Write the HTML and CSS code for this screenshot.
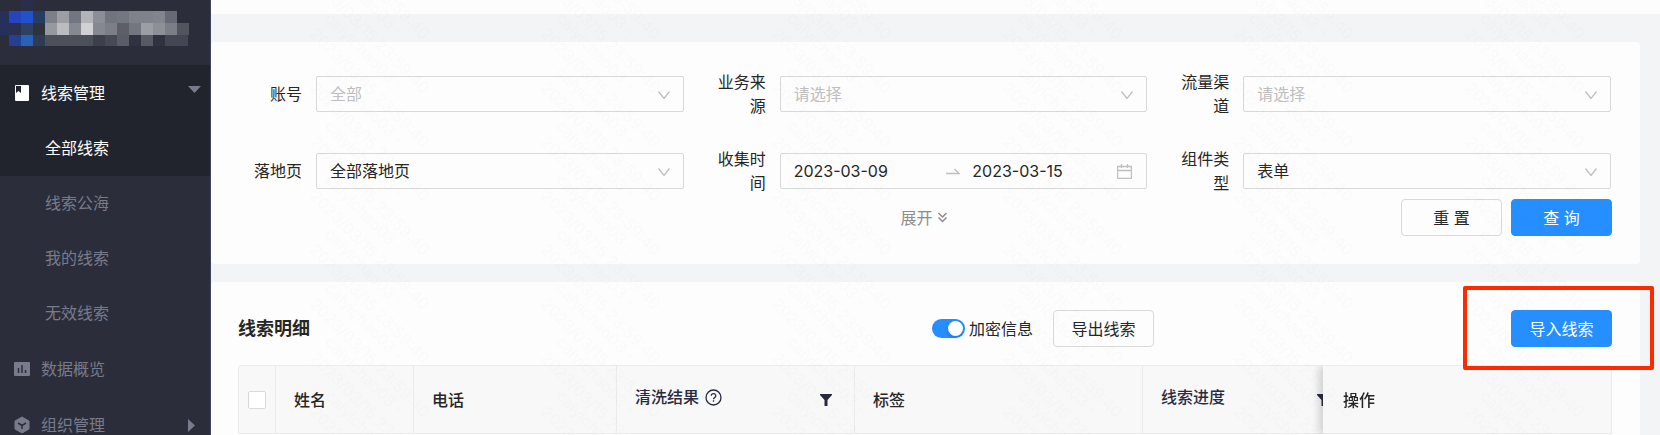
FILE: index.html
```html
<!DOCTYPE html>
<html lang="zh-CN">
<head>
    <meta charset="UTF-8">
    <meta name="viewport" content="width=device-width, initial-scale=1.0">
    <title>线索管理 - 全部线索</title>
    <link rel="stylesheet" href="styles.css">
</head>
<body>
<div class="app">
    <!-- Sidebar -->
    <aside class="sidebar">
        <div class="brand">
            <svg width="190" height="48" viewBox="0 0 190 48" shape-rendering="crispEdges" aria-hidden="true">
                <rect x="21" y="0" width="12" height="11" fill="#292e4b"/>
                <rect x="0" y="11" width="9" height="12" fill="#27305a"/>
                <rect x="9" y="11" width="12" height="12" fill="#2544bd"/>
                <rect x="21" y="11" width="12" height="12" fill="#2152cd"/>
                <rect x="33" y="11" width="12" height="12" fill="#283c62"/>
                <rect x="45" y="11" width="12" height="12" fill="#7c7e88"/>
                <rect x="57" y="11" width="12" height="12" fill="#9c9ea3"/>
                <rect x="69" y="11" width="12" height="12" fill="#737580"/>
                <rect x="81" y="11" width="12" height="12" fill="#b3b4ba"/>
                <rect x="93" y="11" width="12" height="12" fill="#8c8e97"/>
                <rect x="105" y="11" width="12" height="12" fill="#70747e"/>
                <rect x="117" y="11" width="12" height="12" fill="#737780"/>
                <rect x="129" y="11" width="24" height="12" fill="#7f818b"/>
                <rect x="153" y="11" width="12" height="12" fill="#83858e"/>
                <rect x="165" y="11" width="12" height="12" fill="#676a74"/>
                <rect x="0" y="23" width="9" height="12" fill="#27305a"/>
                <rect x="9" y="23" width="12" height="12" fill="#2a3050"/>
                <rect x="21" y="23" width="12" height="12" fill="#2f4060"/>
                <rect x="33" y="23" width="12" height="12" fill="#2c333f"/>
                <rect x="45" y="23" width="12" height="12" fill="#9799a1"/>
                <rect x="57" y="23" width="12" height="12" fill="#bbbcc0"/>
                <rect x="69" y="23" width="12" height="12" fill="#878992"/>
                <rect x="81" y="23" width="12" height="12" fill="#d0d1d5"/>
                <rect x="93" y="23" width="12" height="12" fill="#868891"/>
                <rect x="105" y="23" width="12" height="12" fill="#7c7f87"/>
                <rect x="117" y="23" width="12" height="12" fill="#5c5f68"/>
                <rect x="129" y="23" width="12" height="12" fill="#737680"/>
                <rect x="141" y="23" width="12" height="12" fill="#9c9ea3"/>
                <rect x="153" y="23" width="12" height="12" fill="#8e9098"/>
                <rect x="165" y="23" width="12" height="12" fill="#7b7d87"/>
                <rect x="177" y="23" width="12" height="12" fill="#51555e"/>
                <rect x="9" y="35" width="12" height="11" fill="#263f92"/>
                <rect x="21" y="35" width="12" height="11" fill="#2761b8"/>
                <rect x="33" y="35" width="12" height="11" fill="#2e3c53"/>
                <rect x="45" y="35" width="48" height="11" fill="#4c5059"/>
                <rect x="93" y="35" width="12" height="11" fill="#3d404c"/>
                <rect x="105" y="35" width="12" height="11" fill="#474a55"/>
                <rect x="117" y="35" width="12" height="11" fill="#5a5d66"/>
                <rect x="129" y="35" width="12" height="11" fill="#2f3240"/>
                <rect x="141" y="35" width="12" height="11" fill="#575a63"/>
                <rect x="153" y="35" width="12" height="11" fill="#30333f"/>
                <rect x="165" y="35" width="23" height="11" fill="#444753"/>
            </svg>
        </div>
        <nav>
            <ul class="menu">
                <li class="menu-open">
                    <a class="menu-item active" href="#">
                        <svg class="menu-icon" width="16" height="18" viewBox="0 0 16 18" aria-hidden="true">
                            <path fill="currentColor" fill-rule="evenodd" d="M2 1h12a1 1 0 0 1 1 1v14a1 1 0 0 1-1 1H2a1 1 0 0 1-1-1V2a1 1 0 0 1 1-1zM2 2v7l2.500-2L7 9V2z"/>
                        </svg>
                        线索管理
                        <svg class="caret" width="13" height="7" viewBox="0 0 13 7" aria-hidden="true"><path fill="#787b8c" d="M0 0h13L6.500 7z"/></svg>
                    </a>
                    <ul class="submenu">
                        <li><a class="submenu-item active" href="#">全部线索</a></li>
                        <li><a class="submenu-item" href="#">线索公海</a></li>
                        <li><a class="submenu-item" href="#">我的线索</a></li>
                        <li><a class="submenu-item" href="#">无效线索</a></li>
                    </ul>
                </li>
                <li>
                    <a class="menu-item" href="#">
                        <svg class="menu-icon" width="16" height="18" viewBox="0 0 16 18" aria-hidden="true">
                            <rect y="2" width="16" height="14" rx="1" fill="currentColor"/>
                            <path stroke="#2b2e3a" stroke-width="1.500" d="M4.500 8v5M8 5v8M11.500 10v3"/>
                        </svg>
                        数据概览
                    </a>
                </li>
                <li>
                    <a class="menu-item" href="#">
                        <svg class="menu-icon" width="16" height="18" viewBox="0 0 16 18" aria-hidden="true">
                            <path fill="currentColor" stroke="currentColor" stroke-linejoin="round" d="M8 1l7 4v8l-7 4-7-4V5z"/>
                            <path fill="none" stroke="#2b2e3a" stroke-width="1.500" d="M4 7l4 2.500L12 7M8 9.500V13"/>
                        </svg>
                        组织管理
                        <svg class="caret caret-right" width="7" height="13" viewBox="0 0 7 13" aria-hidden="true"><path fill="currentColor" d="M0 0v13l7-6.500z"/></svg>
                    </a>
                </li>
            </ul>
        </nav>
    </aside>

    <main class="main">
        <div class="topbar"></div>

        <!-- Search filters -->
        <form class="card filter-card">
            <div class="filters">
                <div class="field">
                    <label for="account">账号</label>
                    <div class="select-box">
                        <select id="account" class="placeholder"><option>全部</option></select>
                        <svg class="chevron" width="12" height="8" viewBox="0 0 12 8" aria-hidden="true"><path d="M.5.5L6 7.500 11.500.5"/></svg>
                    </div>
                </div>
                <div class="field">
                    <label for="source">业务来源</label>
                    <div class="select-box">
                        <select id="source" class="placeholder"><option>请选择</option></select>
                        <svg class="chevron" width="12" height="8" viewBox="0 0 12 8" aria-hidden="true"><path d="M.5.5L6 7.500 11.500.5"/></svg>
                    </div>
                </div>
                <div class="field">
                    <label for="channel">流量渠道</label>
                    <div class="select-box">
                        <select id="channel" class="placeholder"><option>请选择</option></select>
                        <svg class="chevron" width="12" height="8" viewBox="0 0 12 8" aria-hidden="true"><path d="M.5.5L6 7.500 11.500.5"/></svg>
                    </div>
                </div>
                <div class="field">
                    <label for="landing">落地页</label>
                    <div class="select-box">
                        <select id="landing"><option>全部落地页</option></select>
                        <svg class="chevron" width="12" height="8" viewBox="0 0 12 8" aria-hidden="true"><path d="M.5.5L6 7.500 11.500.5"/></svg>
                    </div>
                </div>
                <div class="field">
                    <label for="dateStart">收集时间</label>
                    <div class="date-range">
                        <input class="date-start" type="text" id="dateStart" value="2023-03-09">
                        <svg class="date-arrow" width="14" height="8" viewBox="0 0 14 8" aria-hidden="true"><path d="M0 6.500h13L8.500 2"/></svg>
                        <input class="date-end" type="text" id="dateEnd" value="2023-03-15" aria-label="结束日期">
                        <svg class="date-icon" width="15" height="15" viewBox="0 0 15 15" aria-hidden="true"><path d="M.5 2.500h14v12H.5zM.5 6.500h14M4.500 0v4M10.500 0v4"/></svg>
                    </div>
                </div>
                <div class="field">
                    <label for="component">组件类型</label>
                    <div class="select-box">
                        <select id="component"><option>表单</option></select>
                        <svg class="chevron" width="12" height="8" viewBox="0 0 12 8" aria-hidden="true"><path d="M.5.5L6 7.500 11.500.5"/></svg>
                    </div>
                </div>
            </div>
            <div class="filter-actions">
                <button type="button" class="expand">
                    展开
                    <svg width="9" height="11" viewBox="0 0 9 11" aria-hidden="true"><path d="M.5 1l4 4 4-4M.5 5.500l4 4 4-4"/></svg>
                </button>
                <div class="filter-buttons">
                    <button type="reset" class="btn">重 置</button>
                    <button type="submit" class="btn btn-primary">查 询</button>
                </div>
            </div>
        </form>

        <!-- Lead list -->
        <section class="card list-card">
            <div class="toolbar">
                <h2>线索明细</h2>
                <div class="toolbar-middle">
                    <label class="switch"><input type="checkbox" checked>加密信息</label>
                    <button type="button" class="btn">导出线索</button>
                </div>
                <div class="import">
                    <button type="button" class="btn btn-primary">导入线索</button>
                </div>
            </div>
            <div class="table-wrap">
                <table>
                    <colgroup>
                        <col class="col-check">
                        <col class="col-name">
                        <col class="col-phone">
                        <col class="col-result">
                        <col class="col-tag">
                        <col class="col-progress">
                        <col class="col-action">
                    </colgroup>
                    <thead>
                        <tr>
                            <th class="check"><input type="checkbox" aria-label="全选"></th>
                            <th>姓名</th>
                            <th>电话</th>
                            <th>
                                <div class="th-filter">
                                    <span class="th-title">清洗结果
                                        <svg width="17" height="17" viewBox="0 0 17 17" fill="none" stroke="currentColor" aria-hidden="true">
                                            <circle cx="8.500" cy="8.500" r="7.500" stroke-width="1.300"/>
                                            <path stroke-width="1.300" d="M6.200 6.800a2.300 2.100 0 1 1 3.400 1.800c-.8.4-1.100.8-1.100 1.600M8.500 11.300v1.400"/>
                                        </svg>
                                    </span>
                                    <svg width="12" height="12" viewBox="0 0 12 12" aria-hidden="true"><path fill="currentColor" d="M0 0h12v1L7.500 6v6h-3V6L0 1z"/></svg>
                                </div>
                            </th>
                            <th>标签</th>
                            <th>
                                <div class="th-filter">
                                    <span class="th-title">线索进度</span>
                                    <svg width="12" height="12" viewBox="0 0 12 12" aria-hidden="true"><path fill="currentColor" d="M0 0h12v1L7.500 6v6h-3V6L0 1z"/></svg>
                                </div>
                            </th>
                            <th class="fixed-right">操作</th>
                        </tr>
                    </thead>
                </table>
            </div>
        </section>

        <!-- Watermark -->
        <svg class="watermark" aria-hidden="true">
            <defs>
                <pattern id="mark" width="231" height="54" patternUnits="userSpaceOnUse">
                    <g id="markText">
                        <text transform="translate(98 35) rotate(45)">2023/03/15 23:59:40</text>
                        <text transform="translate(113 19) rotate(45)">caiyichao03 -</text>
                    </g>
                    <use href="#markText" y="-54"/>
                    <use href="#markText" y="-108"/>
                    <use href="#markText" y="-162"/>
                </pattern>
            </defs>
            <rect width="100%" height="100%" fill="url(#mark)"/>
        </svg>
    </main>
</div>
</body>
</html>
```

FILE: styles.css
```css
* {
    box-sizing: border-box;
}

body {
    margin: 0;
    font-family: Inter, "Noto Sans CJK SC", sans-serif;
    font-size: 16px;
    line-height: 24px;
    color: #262626;
    background-color: #f3f4f6;
}

ul {
    list-style: none;
    margin: 0;
    padding: 0;
}

button,
input,
select {
    font: inherit;
    color: inherit;
}

.app {
    display: flex;
    height: 100vh;
    overflow: hidden;
}

/* Sidebar */
.sidebar {
    flex: 0 0 211px;
    background-color: #2b2e3a;
    border-right: 1px solid #414456;
    color: #787b8c;
}

.brand {
    height: 65px;
}

.brand svg {
    display: block;
}

.menu-item,
.submenu-item {
    display: flex;
    align-items: center;
    color: inherit;
    text-decoration: none;
}

.menu-item {
    height: 56px;
    padding: 0 9px 0 14px;
}

.menu-icon {
    margin-right: 11px;
}

.submenu-item {
    height: 55px;
    padding: 0 0 2px 45px;
}

.menu-item.active,
.submenu-item.active {
    background-color: #21242d;
    color: #fff;
}

.caret {
    margin-left: auto;
    margin-bottom: 7px;
}

.caret-right {
    margin-right: 6px;
    margin-bottom: 0;
}

/* Main area */
.main {
    position: relative;
    flex: 1;
    min-width: 0;
}

.topbar {
    height: 14px;
    margin-bottom: 28px;
    background-color: #fdfdfd;
}

.card {
    margin-right: 20px;
    background-color: #fdfdfd;
    border-radius: 4px;
}

/* Filters */
.filter-card {
    padding: 28px 0;
    margin-bottom: 18px;
}

.filters {
    display: grid;
    grid-template-columns: repeat(3, minmax(0, 1fr));
    gap: 29px 32px;
    padding: 0 29px 0 41px;
}

.field {
    display: flex;
    align-items: center;
    height: 48px;
}

.field label {
    flex: 0 0 50px;
    margin-right: 14px;
    text-align: right;
}

.select-box {
    position: relative;
    flex: 1;
}

.select-box select {
    display: block;
    appearance: none;
    width: 100%;
    height: 36px;
    padding: 0 13px;
    border: 1px solid #d9d9d9;
    border-radius: 2px;
    background-color: transparent;
}

.select-box .placeholder {
    color: #bfbfbf;
}

.chevron {
    position: absolute;
    right: 14px;
    top: 15px;
    pointer-events: none;
}

.chevron,
.date-arrow,
.date-icon {
    fill: none;
    stroke: #bfbfbf;
    stroke-width: 1.3;
}

.date-range {
    display: flex;
    align-items: center;
    flex: 1;
    min-width: 0;
    height: 36px;
    padding: 0 14px 0 13px;
    border: 1px solid #d9d9d9;
    border-radius: 2px;
}

.date-range input {
    min-width: 0;
    padding: 0;
    border: 0;
    background: none;
}

.date-start {
    flex: 1;
}

.date-arrow {
    margin-right: 12px;
}

.date-end {
    flex: 0 0 145px;
}

.filter-actions {
    display: grid;
    grid-template-columns: 1fr auto 1fr;
    align-items: center;
    margin-top: 4px;
    padding: 0 28px 0 24px;
}

.expand {
    display: flex;
    align-items: center;
    gap: 5px;
    grid-column: 2;
    padding: 0;
    border: 0;
    background: none;
    color: #8c8c8c;
    cursor: pointer;
}

.expand svg {
    fill: none;
    stroke: currentColor;
    stroke-width: 1.5;
}

.filter-buttons {
    display: flex;
    justify-content: flex-end;
    gap: 9px;
}

.btn {
    min-width: 101px;
    height: 37px;
    padding: 0 17px;
    border: 1px solid #d9d9d9;
    border-radius: 4px;
    background-color: #fdfdfd;
    cursor: pointer;
}

.btn-primary {
    border-color: #268fff;
    background-color: #268fff;
    color: #fff;
}

/* List */
.list-card {
    min-height: 400px;
    padding: 28px 28px 28px 27px;
}

.toolbar {
    display: grid;
    grid-template-columns: 1fr 1fr 1fr;
    align-items: center;
    margin-bottom: 18px;
}

.toolbar h2 {
    margin: 0;
    font-size: 18px;
    font-weight: 600;
}

.toolbar-middle {
    display: flex;
    align-items: center;
    justify-content: flex-end;
    gap: 20px;
}

.switch {
    display: flex;
    align-items: center;
    gap: 4px;
}

.switch input {
    appearance: none;
    display: flex;
    justify-content: flex-end;
    width: 33px;
    height: 19px;
    margin: 0;
    padding: 2px;
    border-radius: 10px;
    background-color: #268fff;
}

.switch input::before {
    content: "";
    width: 15px;
    height: 15px;
    border-radius: 50%;
    background-color: #fff;
    box-shadow: 0 2px 4px rgba(0, 35, 11, 0.2);
}

/* Import button with highlight frame */
.import {
    position: relative;
    justify-self: end;
}

.import::after {
    content: "";
    position: absolute;
    z-index: 3;
    top: -24px;
    right: -42px;
    bottom: -23px;
    left: -48px;
    border: 4px solid #ff2a00;
    border-radius: 2px;
    pointer-events: none;
}

/* Table */
.table-wrap {
    overflow: hidden;
    border: 1px solid #ebebeb;
    border-bottom: 0;
    border-radius: 4px 4px 0 0;
}

table {
    width: 1401px;
    min-width: 100%;
    table-layout: fixed;
    border-spacing: 0;
}

.col-check {
    width: 37px;
}

.col-name {
    width: 138px;
}

.col-phone {
    width: 203px;
}

.col-result {
    width: 238px;
}

.col-tag {
    width: 288px;
}

.col-progress {
    width: 209px;
}

.col-action {
    width: 288px;
}

th {
    height: 68px;
    padding: 0 18px;
    border-right: 1px solid #ebebeb;
    border-bottom: 1px solid #ebebeb;
    background-color: #f8f8f8;
    font-weight: 500;
    text-align: left;
}

th.check {
    padding: 0;
}

th.check input {
    appearance: none;
    display: block;
    width: 18px;
    height: 18px;
    margin: 0 auto;
    border: 1px solid #d9d9d9;
    border-radius: 2px;
    background-color: #fff;
}

.th-filter {
    display: flex;
    align-items: center;
    justify-content: space-between;
    padding-right: 4px;
    color: #282b40;
}

.th-title {
    display: flex;
    align-items: center;
    gap: 6px;
    padding-bottom: 5px;
}

th.fixed-right {
    position: sticky;
    right: 0;
    padding-left: 20px;
    border-right: 0;
    box-shadow: -4px 0 8px rgba(0, 0, 0, 0.16);
}

/* Watermark */
.watermark {
    position: absolute;
    z-index: 2;
    top: 0;
    left: 0;
    width: 100%;
    height: 100%;
    pointer-events: none;
}

.watermark text {
    font-family: Inter, sans-serif;
    font-size: 16px;
    fill: rgba(0, 0, 0, 0.012);
}
```
